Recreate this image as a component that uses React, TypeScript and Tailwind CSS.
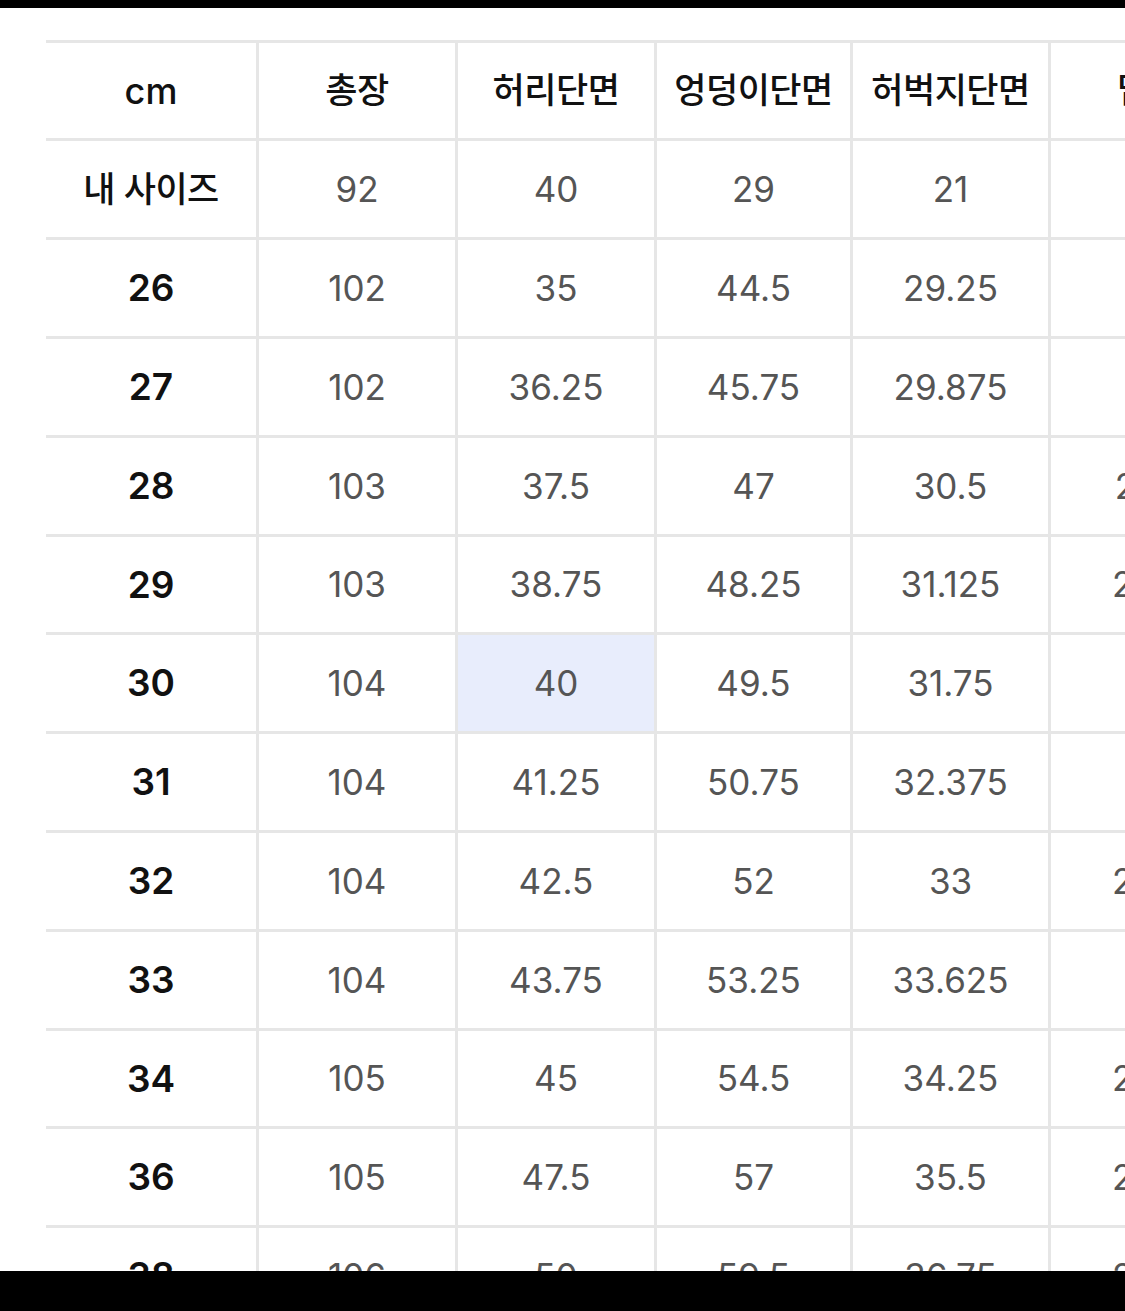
const columns = ['cm', '총장', '허리단면', '엉덩이단면', '허벅지단면', '밑위']

const rows: { label: string; values: string[] }[] = [
  { label: '내 사이즈', values: ['92', '40', '29', '21', ''] },
  { label: '26', values: ['102', '35', '44.5', '29.25', '26'] },
  { label: '27', values: ['102', '36.25', '45.75', '29.875', '27'] },
  { label: '28', values: ['103', '37.5', '47', '30.5', '27.5'] },
  { label: '29', values: ['103', '38.75', '48.25', '31.125', '28.5'] },
  { label: '30', values: ['104', '40', '49.5', '31.75', '29'] },
  { label: '31', values: ['104', '41.25', '50.75', '32.375', '29'] },
  { label: '32', values: ['104', '42.5', '52', '33', '29.5'] },
  { label: '33', values: ['104', '43.75', '53.25', '33.625', '30'] },
  { label: '34', values: ['105', '45', '54.5', '34.25', '29.5'] },
  { label: '36', values: ['105', '47.5', '57', '35.5', '29.5'] },
  { label: '38', values: ['106', '50', '59.5', '36.75', '29.5'] },
]

// widths of the value columns after the first one
const colWidths = ['w-[199px]', 'w-[199px]', 'w-[196px]', 'w-[198px]', 'w-[198px]']

const font = { fontFamily: 'Inter, "Noto Sans CJK KR", sans-serif' }

export default function App() {
  return (
    <div className="w-[1125px] h-[1311px] flex flex-col bg-white" style={font}>
      <div className="h-[8px] bg-black shrink-0" />

      <div className="flex-1 overflow-hidden pt-[32px] pl-[46px]">
        <div className="w-max">
          {/* Header */}
          <div className="flex h-[101px] border-t-[3px] border-b-[3px] border-[#e6e6e6]">
            {columns.map((col, i) => (
              <div
                key={col}
                className={`flex items-center justify-center border-r-[3px] border-[#e6e6e6] font-medium text-[#111] ${
                  i === 0 ? 'w-[213px] text-[36px]' : `${colWidths[i - 1]} text-[35px] tracking-[-0.5px]`
                }`}
              >
                {col}
              </div>
            ))}
          </div>

          {/* Body */}
          {rows.map((row, r) => (
            <div
              key={row.label}
              className={`flex border-b-[3px] border-[#e6e6e6] ${r % 5 === 4 ? 'h-[98px]' : 'h-[99px]'}`}
            >
              <div
                className={`w-[213px] flex items-center justify-center border-r-[3px] border-[#e6e6e6] text-[#111] ${
                  r === 0 ? 'text-[35px] font-medium tracking-[-0.5px]' : 'text-[37px] font-semibold'
                }`}
              >
                {row.label}
              </div>
              {row.values.map((v, i) => (
                <div
                  key={i}
                  className={`${colWidths[i]} flex items-center justify-center border-r-[3px] border-[#e6e6e6] text-[35px] text-[#555] ${
                    row.label === '30' && i === 1 ? 'bg-[#e8edfc]' : ''
                  }`}
                >
                  {v}
                </div>
              ))}
            </div>
          ))}
        </div>
      </div>

      <div className="h-[40px] bg-black shrink-0" />
    </div>
  )
}
